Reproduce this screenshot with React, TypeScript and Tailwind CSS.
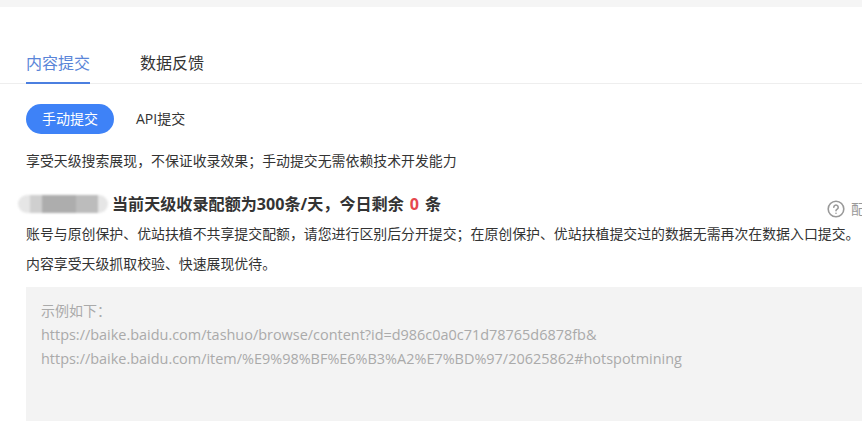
export default function App() {
  return (
    <div className={`w-[862px] h-[431px] overflow-hidden bg-white text-[#333] font-['Open_Sans','Noto_Sans_CJK_SC',sans-serif]`}>
      <div className="h-[7px] bg-[#f5f5f5]" />

      {/* Tabs */}
      <div className="mt-[38px] flex h-[39px] items-start border-b border-[#eee] pl-[26px] text-base leading-[36px]">
        <div className="h-[39px] w-16 border-b-2 border-[#4b7fe0] text-[#5a85d8]">内容提交</div>
        <div className="ml-[50px]">数据反馈</div>
      </div>

      <div className="pl-[26px]">
        {/* Sub tabs */}
        <div className="mt-[20px] flex items-center text-sm">
          <div className="flex h-[30px] w-[88px] items-center justify-center rounded-full bg-[#3e82f7] text-white">手动提交</div>
          <div className="ml-[22px]">API提交</div>
        </div>

        <p className="mt-[17px] text-[13.9px] leading-5">享受天级搜索展现，不保证收录效果；手动提交无需依赖技术开发能力</p>

        {/* Quota */}
        <div className="relative mt-[20px] flex h-[26px] w-[836px] items-center whitespace-nowrap text-[16.1px] font-bold">
          <div className="-ml-2 mr-[4px] flex h-[18px] w-[90px] overflow-hidden rounded-[9px] bg-[#e6e6e6] blur-[1.2px]">
            <div className="ml-3 w-3 bg-[#cfcfcf]" />
            <div className="w-[34px] bg-[#adadad]" />
            <div className="w-[22px] bg-[#bcbcbc]" />
          </div>
          <span>当前天级收录配额为300条/天，今日剩余</span>
          <span className="mx-[6px] text-[#e5484d]">0</span>
          <span>条</span>
          <div className="absolute left-[801px] top-[8px] flex items-center text-sm font-normal text-[#999]">
            <svg className="h-[18px] w-[18px]" viewBox="0 0 18 18" fill="none" stroke="#999" strokeWidth="1.6" strokeLinecap="round">
              <circle cx="9" cy="9" r="7.8" />
              <path d="M6.8 7.2a2.2 2.2 0 1 1 3.4 1.9c-.8.5-1.2.9-1.2 1.7" />
              <path d="M9 13.2v.1" />
            </svg>
            <span className="ml-[6px]">配</span>
          </div>
        </div>

        <p className="mt-[7px] whitespace-nowrap text-[13.9px] leading-5">账号与原创保护、优站扶植不共享提交配额，请您进行区别后分开提交；在原创保护、优站扶植提交过的数据无需再次在数据入口提交。</p>
        <p className="mt-[10px] text-[13.9px] leading-5">内容享受天级抓取校验、快速展现优待。</p>

        {/* Example box */}
        <div className="mt-[13px] h-[134px] w-[836px] bg-[#f3f3f3] pl-[15px] pt-[12px] text-[14.45px] leading-6 text-[#aaa]">
          <div className="text-[14px]">示例如下：</div>
          <div>https://baike.baidu.com/tashuo/browse/content?id=d986c0a0c71d78765d6878fb&amp;</div>
          <div>https://baike.baidu.com/item/%E9%98%BF%E6%B3%A2%E7%BD%97/20625862#hotspotmining</div>
        </div>
      </div>
    </div>
  );
}
